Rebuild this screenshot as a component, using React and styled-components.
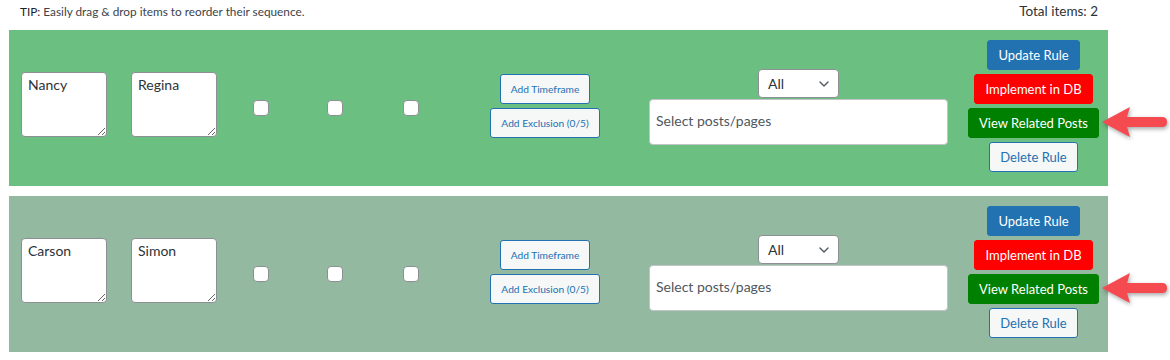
import React from "react";
import styled, { createGlobalStyle } from "styled-components";
import { ChevronDown } from "lucide-react";

const GlobalStyle = createGlobalStyle`
    body {
        margin: 0;
        background: #fff;
        font-family: "Lato", "Liberation Sans", sans-serif;
        color: #3c434a;
    }
`;

const Wrap = styled.div`
    width: 1099px;
    margin-left: 9px;
`;

const Header = styled.div`
    height: 22px;
    margin-bottom: 8px;
    padding: 0 10px 0 11px;
    display: flex;
    align-items: center;
    justify-content: space-between;
    font-size: 11.8px;
    color: #3c434a;
    & b {
        font-weight: 400;
        color: #1d2327;
    }
`;

const Total = styled.span`
    font-size: 13.5px;
    color: #2c3338;
`;

const RuleRow = styled.div`
    position: relative;
    height: 156px;
    margin-bottom: 10px;
    background: ${p => p.$bg};
    display: grid;
    grid-template-columns: 110px 110px 64px 84px 68px 200px 307px 1fr;
    align-items: center;
`;

const Cell = styled.div`
    display: flex;
    flex-direction: column;
    align-items: center;
    gap: ${p => p.$gap || 0}px;
    margin-top: ${p => p.$shift || 0}px;
    padding-left: ${p => p.$pl || 0}px;
`;

const NameBox = styled.textarea`
    width: 86px;
    height: 65px;
    box-sizing: border-box;
    border: 1px solid #8c8f94;
    border-radius: 4px;
    padding: 2px 6px;
    font-family: inherit;
    font-size: 14px;
    line-height: 20px;
    color: #2c3338;
    background: #fff;
    resize: both;
    outline: none;
`;

const Check = styled.input.attrs({ type: "checkbox" })`
    appearance: none;
    margin: 0;
    width: 16px;
    height: 16px;
    border: 1px solid #8c8f94;
    border-radius: 4px;
    background: #fff;
`;

const SmallButton = styled.button`
    height: 30px;
    padding: 0 10px;
    border: 1px solid #2271b1;
    border-radius: 3px;
    background: #f6f7f7;
    color: #2271b1;
    font-family: inherit;
    font-size: 10.2px;
    white-space: nowrap;
`;

const SelectWrap = styled.div`
    position: relative;
    width: 81px;
    height: 29px;
    box-sizing: border-box;
    border: 1px solid #8c8f94;
    border-radius: 4px;
    background: #fff;
    padding-left: 9px;
    display: flex;
    align-items: center;
    font-size: 14px;
    color: #2c3338;
    & svg {
        position: absolute;
        right: 6px;
        top: 6px;
        color: #50575e;
    }
`;

const PostsInput = styled.input`
    width: 299px;
    height: 46px;
    box-sizing: border-box;
    border: 1px solid #c3c4c7;
    border-radius: 4px;
    padding: 0 6px 3px;
    font-family: inherit;
    font-size: 14px;
    color: #2c3338;
    outline: none;
    &::placeholder {
        color: #50575e;
    }
`;

const RuleButton = styled.button`
    height: 30px;
    padding: 0 10px;
    border: 1px solid ${p => p.$border || p.$bg};
    border-radius: 3px;
    background: ${p => p.$bg};
    color: ${p => p.$color || "#fff"};
    font-family: inherit;
    font-size: 13px;
    white-space: nowrap;
`;

const Arrow = styled.svg`
    position: absolute;
    right: -62px;
    top: 74px;
    filter: drop-shadow(1px 2px 2px rgba(0, 0, 0, 0.35));
`;

const rules = [
    { first: "Nancy", last: "Regina", bg: "#6bbf80" },
    { first: "Carson", last: "Simon", bg: "#93b9a0" },
];

const Rule = ({ first, last, bg }) => (
    <RuleRow $bg={bg}>
        <Cell $shift={-7}><NameBox defaultValue={first} /></Cell>
        <Cell $shift={-7}><NameBox defaultValue={last} /></Cell>
        <Cell><Check /></Cell>
        <Cell><Check /></Cell>
        <Cell><Check /></Cell>
        <Cell $gap={4} $shift={-4}>
            <SmallButton>Add Timeframe</SmallButton>
            <SmallButton>Add Exclusion (0/5)</SmallButton>
        </Cell>
        <Cell $gap={1} $shift={-2}>
            <SelectWrap>All<ChevronDown size={16} strokeWidth={2} /></SelectWrap>
            <PostsInput placeholder="Select posts/pages" />
        </Cell>
        <Cell $gap={4} $shift={-4} $pl={7}>
            <RuleButton $bg="#2271b1">Update Rule</RuleButton>
            <RuleButton $bg="#ff0000">Implement in DB</RuleButton>
            <RuleButton $bg="#008000">View Related Posts</RuleButton>
            <RuleButton $bg="#f6f7f7" $border="#2271b1" $color="#2271b1">Delete Rule</RuleButton>
        </Cell>
        <Arrow width="70" height="36" viewBox="0 0 70 36">
            <path
                d="M2 18 L30 3 L27 13 L62 13 Q67 13 67 18 Q67 23 62 23 L27 23 L30 33 Z"
                fill="#f44a50"
            />
        </Arrow>
    </RuleRow>
);

const App = () => (
    <>
        <GlobalStyle />
        <Wrap>
            <Header>
                <span><b>TIP:</b> Easily drag &amp; drop items to reorder their sequence.</span>
                <Total>Total items: 2</Total>
            </Header>
            {rules.map(r => <Rule key={r.first} {...r} />)}
        </Wrap>
    </>
);

export default App;
